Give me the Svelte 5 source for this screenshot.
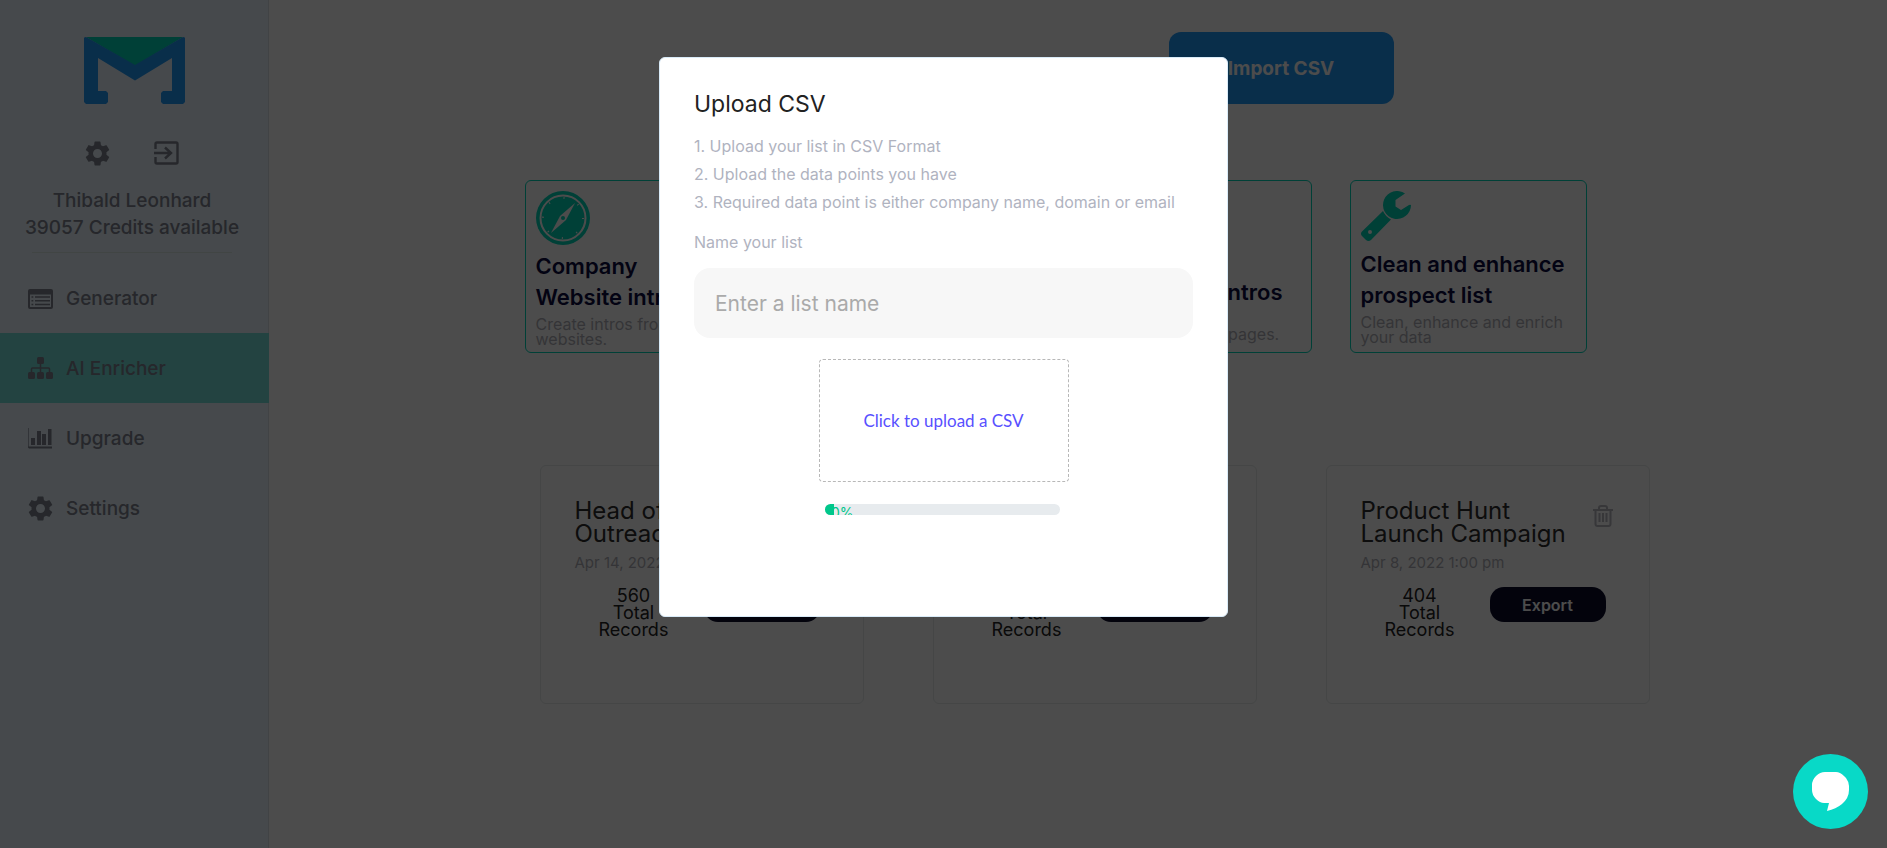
<script lang="ts">
	interface Tool {
		icon: 'compass' | 'page' | 'wrench';
		title: string[];
		description: string[];
	}

	const navItems = [
		{ icon: 'list', label: 'Generator' },
		{ icon: 'sitemap', label: 'AI Enricher' },
		{ icon: 'chart', label: 'Upgrade' },
		{ icon: 'gear', label: 'Settings' }
	];

	const tools: Tool[] = [
		{
			icon: 'compass',
			title: ['Company', 'Website intros'],
			description: ['Create intros from', 'websites.']
		},
		{
			icon: 'page',
			title: ['LinkedIn', 'intros'],
			description: ['Create intros from', 'profiles.']
		},
		{
			icon: 'page',
			title: ['Company', 'Career page intros'],
			description: ['Create intros from', 'company LinkedIn pages.']
		},
		{
			icon: 'wrench',
			title: ['Clean and enhance', 'prospect list'],
			description: ['Clean, enhance and enrich', 'your data']
		}
	];

	const lists = [
		{ title: ['Head of', 'Outreach'], date: 'Apr 14, 2022 1:00 pm', records: 560 },
		{ title: ['Sales', 'Campaign'], date: 'Apr 12, 2022 1:00 pm', records: 500 },
		{ title: ['Product Hunt', 'Launch Campaign'], date: 'Apr 8, 2022 1:00 pm', records: 404 }
	];

	const steps = [
		'1. Upload your list in CSV Format',
		'2. Upload the data points you have',
		'3. Required data point is either company name, domain or email'
	];

	let activeItem = $state('AI Enricher');
	let listName = $state('');
	let open = $state(true);
	let progress = $state(0);
	let fileInput: HTMLInputElement;

	// keep a small stub of the bar visible at 0%
	const barWidth = $derived(Math.max(progress, 4));
</script>

{#snippet gear()}
	<svg class="icon" viewBox="2 2 20 20" aria-hidden="true">
		<path
			d="M19.14 12.94c.04-.3.06-.61.06-.94 0-.32-.02-.64-.07-.94l2.03-1.58c.18-.14.23-.41.12-.61l-1.92-3.32c-.12-.22-.37-.29-.59-.22l-2.39.96c-.5-.38-1.03-.7-1.62-.94l-.36-2.54c-.04-.24-.24-.41-.48-.41h-3.84c-.24 0-.43.17-.47.41l-.36 2.54c-.59.24-1.13.57-1.62.94l-2.39-.96c-.22-.08-.47 0-.59.22L2.74 8.87c-.12.21-.08.47.12.61l2.03 1.58c-.05.3-.09.63-.09.94s.02.64.07.94l-2.03 1.58c-.18.14-.23.41-.12.61l1.92 3.32c.12.22.37.29.59.22l2.39-.96c.5.38 1.03.7 1.62.94l.36 2.54c.05.24.24.41.48.41h3.84c.24 0 .44-.17.47-.41l.36-2.54c.59-.24 1.13-.56 1.62-.94l2.39.96c.22.08.47 0 .59-.22l1.92-3.32c.12-.22.07-.47-.12-.61l-2.01-1.58zM12 15.6c-1.98 0-3.6-1.62-3.6-3.6s1.62-3.6 3.6-3.6 3.6 1.62 3.6 3.6-1.62 3.6-3.6 3.6z"
		/>
	</svg>
{/snippet}

<div class="page">
	<aside class="sidebar">
		<svg class="logo" viewBox="0 0 101 67" role="img" aria-label="Logo">
			<path class="logo-flap" d="M2 0H99L51 29Z" />
			<path
				class="logo-body"
				d="M1 0 3 .5 51 28 98 .5 100 0 101 1V65L99 67H79L77 65V56L79 54H88V21L51 43.500 14 21V54H22L24 56V65L22 67H2L0 65V1Z"
			/>
		</svg>
		<div class="account-actions">
			<button type="button" class="icon-btn" aria-label="Account settings">{@render gear()}</button>
			<button type="button" class="icon-btn" aria-label="Log out">
				<svg class="icon" viewBox="0 0 25 25" aria-hidden="true">
					<path
						class="line"
						d="M1.500 8V3Q1.500 1.500 3 1.500H22Q23.500 1.500 23.500 3V21Q23.500 22.500 22 22.500H3Q1.500 22.500 1.500 21V16M0 12H17M11 6.500 17 12 11 17.500"
					/>
				</svg>
			</button>
		</div>
		<p class="account">Thibald Leonhard</p>
		<p class="account">39057 Credits available</p>
		<hr class="divider" />
		<nav>
			{#each navItems as item}
				<a
					href="#{item.icon}"
					class="nav-item"
					class:active={activeItem === item.label}
					onclick={() => (activeItem = item.label)}
				>
					{#if item.icon === 'gear'}
						{@render gear()}
					{:else if item.icon === 'list'}
						<svg class="icon" viewBox="0 0 25 25" aria-hidden="true">
							<path
								fill-rule="evenodd"
								d="M2 3H23Q25 3 25 5V21Q25 23 23 23H2Q0 23 0 21V5Q0 3 2 3ZM2 8.500V20.500Q2 21 2.500 21H22.500Q23 21 23 20.500V8.500Z"
							/>
							<path
								d="M3.500 10.200h1.800v1.600H3.500zM3.500 14h1.800v1.600H3.500zM3.500 17.700h1.800v1.600H3.500zM7 10.200h15v1.600H7zM7 14h15v1.600H7zM7 17.700h15v1.600H7z"
							/>
						</svg>
					{:else if item.icon === 'sitemap'}
						<svg class="icon" viewBox="0 0 25 25" aria-hidden="true">
							<rect x="9" y="1" width="7" height="7" rx="1.500" />
							<path class="thin" d="M12.500 8V16M3.500 16V13Q3.500 12 4.500 12H20.500Q21.500 12 21.500 13V16" />
							<rect x="0" y="16" width="7" height="7" rx="1.500" />
							<rect x="9" y="16" width="7" height="7" rx="1.500" />
							<rect x="18" y="16" width="7" height="7" rx="1.500" />
						</svg>
					{:else}
						<svg class="icon" viewBox="0 0 25 25" aria-hidden="true">
							<path
								d="M0 2H.6V20.500H24V22.500H1L0 21.500ZM3 12H7V19H3zM9 5H13V19H9zM14 8H18V19H14zM20 3H23.500V19H20z"
							/>
						</svg>
					{/if}
					<span>{item.label}</span>
				</a>
			{/each}
		</nav>
	</aside>

	<main class="content">
		<div class="toolbar">
			<button type="button" class="btn-import" onclick={() => (open = true)}>Import CSV</button>
		</div>

		<section class="tools">
			{#each tools as tool}
				<article class="tool-card">
					{#if tool.icon === 'compass'}
						<svg class="tool-icon large" viewBox="0 0 54 54" aria-hidden="true">
							<circle cx="27" cy="27" r="27" />
							<circle class="ring" cx="27" cy="27" r="22.500" />
							<circle class="ticks" cx="27" cy="27" r="20" />
							<path class="cut" d="M39 12 30 29 15 42 24 25Z" />
							<circle cx="27" cy="27" r="2" />
						</svg>
					{:else if tool.icon === 'wrench'}
						<svg class="tool-icon" viewBox="0 0 50 50" aria-hidden="true">
							<path
								d="M44 2.500A14 14 0 1 0 50 14Q49 13.500 48 14L40 19 34.500 15.500V9ZM22 20Q24 25 30 28.500L10 49Q7.500 51 5 49L1 45Q-1 42.500 1 40.500Z"
							/>
							<circle class="cut" cx="9" cy="41" r="2" />
						</svg>
					{:else}
						<svg class="tool-icon small" viewBox="0 0 46 46" aria-hidden="true">
							<rect x="4" y="2" width="38" height="42" rx="4" />
						</svg>
					{/if}
					<h2 class="tool-title">
						{#each tool.title as line}<span>{line}</span>{/each}
					</h2>
					<p class="tool-description">
						{#each tool.description as line}<span>{line}</span>{/each}
					</p>
				</article>
			{/each}
		</section>

		<section class="lists">
			{#each lists as list}
				<article class="list-card">
					<div class="list-head">
						<h3 class="list-title">
							{#each list.title as line}<span>{line}</span>{/each}
						</h3>
						<button type="button" class="btn-delete" aria-label="Delete list">
							<svg class="trash" viewBox="0 0 20 22" aria-hidden="true">
								<path
									d="M0 5H20M6 5V3Q6 1 8 1H12Q14 1 14 3V5M2.500 5V19Q2.500 21 4.500 21H15.500Q17.500 21 17.500 19V5M6.500 8V17M10 8V17M13.500 8V17"
								/>
							</svg>
						</button>
					</div>
					<p class="list-date">{list.date}</p>
					<div class="list-foot">
						<p class="list-records">
							<span>{list.records}</span>
							<span>Total</span>
							<span>Records</span>
						</p>
						<button type="button" class="btn-export">Export</button>
					</div>
				</article>
			{/each}
		</section>
	</main>
</div>

{#if open}
	<div class="backdrop">
		<div class="modal" role="dialog" aria-modal="true" aria-labelledby="upload-title">
			<h1 id="upload-title" class="modal-title">Upload CSV</h1>
			<ul class="steps">
				{#each steps as step}
					<li>{step}</li>
				{/each}
			</ul>
			<label class="field-label" for="list-name">Name your list</label>
			<input
				id="list-name"
				class="field-input"
				type="text"
				placeholder="Enter a list name"
				bind:value={listName}
			/>
			<button type="button" class="dropzone" onclick={() => fileInput.click()}>
				Click to upload a CSV
			</button>
			<input bind:this={fileInput} type="file" accept=".csv" aria-label="CSV file" hidden />
			<div
				class="progress"
				role="progressbar"
				aria-label="Upload progress"
				aria-valuenow={progress}
				aria-valuemin="0"
				aria-valuemax="100"
			>
				<div class="progress-bar" style="width: {barWidth}%">{progress}%</div>
			</div>
		</div>
	</div>
{/if}

<button type="button" class="chat" aria-label="Open chat">
	<svg class="chat-icon" viewBox="0 0 37 39" aria-hidden="true">
		<path
			d="M13 0H24Q28 0 32 4L34 6Q37 10 37 14V18Q37 26 30 32 24 37 15 39L17 31H12Q8 31 4 27 0 23 0 18V13Q0 8 4 4 8 0 13 0Z"
		/>
	</svg>
</button>

<style>
	:global(body) {
		margin: 0;
		background: #fff;
		font-family: Inter, 'Noto Sans', sans-serif;
	}
	h1,
	h2,
	h3,
	p,
	ul {
		margin: 0;
		padding: 0;
	}
	button {
		border: none;
		padding: 0;
		font-family: inherit;
		cursor: pointer;
	}
	.page {
		display: flex;
		min-height: 100vh;
	}
	.sidebar {
		width: 269px;
		flex-shrink: 0;
		padding-top: 37px;
		background: #e9f5fd;
		box-shadow: inset -1px 0 #d9e2e8;
	}
	.logo {
		display: block;
		width: 101px;
		height: 67px;
		margin: 0 auto;
	}
	.logo-flap {
		fill: #00d5b9;
	}
	.logo-body {
		fill: #2199f7;
	}
	.account-actions {
		display: flex;
		justify-content: center;
		gap: 44px;
		margin: 37px 5px 21px 0;
	}
	.icon-btn {
		display: flex;
		background: none;
		color: #7f8290;
	}
	.icon {
		width: 25px;
		height: 25px;
		fill: currentColor;
		flex-shrink: 0;
	}
	.line,
	.thin {
		fill: none;
		stroke: currentColor;
		stroke-width: 2.4;
	}
	.thin {
		stroke-width: 1.5;
	}
	.account {
		padding-right: 5px;
		text-align: center;
		font-size: 19px;
		line-height: 27px;
		font-weight: 500;
		color: #7f8290;
	}
	.divider {
		width: 200px;
		margin: 11px 0 10px 32px;
		border: none;
		border-top: 1px solid #dbe7e4;
	}
	.nav-item {
		display: flex;
		align-items: center;
		gap: 13px;
		height: 70px;
		padding-left: 28px;
		font-size: 19px;
		font-weight: 500;
		color: #7f8290;
		text-decoration: none;
	}
	.nav-item.active {
		background: #75e0d9;
	}
	.content {
		flex: 1;
		min-width: 0;
		padding-top: 32px;
	}
	.toolbar {
		display: flex;
		justify-content: center;
		padding-left: 406px;
	}
	.btn-import {
		width: 225px;
		height: 72px;
		border-radius: 12px;
		background: #2199f7;
		color: #fff;
		font-size: 19px;
		font-weight: 700;
	}
	.tools {
		display: flex;
		justify-content: center;
		gap: 38px;
		margin-top: 76px;
		padding-right: 45px;
	}
	.tool-card {
		box-sizing: border-box;
		width: 237px;
		height: 173px;
		padding: 10px;
		border: 1px solid #00d5b9;
		border-radius: 6px;
		white-space: nowrap;
	}
	.tool-icon {
		display: block;
		width: 50px;
		height: 50px;
		margin-bottom: 8px;
		fill: #00d5b9;
	}
	.tool-icon.large {
		width: 54px;
		height: 54px;
		margin-bottom: 6px;
	}
	.tool-icon.small {
		width: 47px;
		height: 47px;
	}
	.ring {
		fill: none;
		stroke: #fff;
		stroke-width: 2;
	}
	.ticks {
		fill: none;
		stroke: #fff;
		stroke-width: 2;
		stroke-dasharray: 1 14.700;
	}
	.cut {
		fill: #fff;
	}
	.tool-title {
		margin-bottom: 4px;
		font-size: 22px;
		line-height: 31px;
		font-weight: 600;
		color: #0b0b40;
	}
	.tool-title span,
	.tool-description span,
	.list-title span,
	.list-records span {
		display: block;
	}
	.tool-description {
		font-size: 16px;
		line-height: 15px;
		color: #b0b0b8;
	}
	.lists {
		display: flex;
		justify-content: center;
		gap: 69px;
		margin-top: 112px;
		padding-left: 33px;
	}
	.list-card {
		box-sizing: border-box;
		width: 324px;
		height: 239px;
		padding: 33px 36px 33px 34px;
		border: 1px solid #e6eaea;
		border-radius: 6px;
	}
	.list-head {
		display: flex;
		justify-content: space-between;
		align-items: flex-start;
	}
	.list-title {
		font-size: 24px;
		line-height: 23px;
		font-weight: 400;
		color: #2c2c2c;
		white-space: nowrap;
	}
	.btn-delete {
		margin-top: 6px;
		background: none;
	}
	.trash {
		display: block;
		width: 20px;
		height: 22px;
		fill: none;
		stroke: #b8b8c0;
		stroke-width: 2;
	}
	.list-date {
		margin-top: 6px;
		font-size: 15px;
		line-height: 24px;
		color: #b0b0b8;
	}
	.list-foot {
		display: flex;
		align-items: flex-start;
		justify-content: space-between;
		margin-top: 12px;
		padding: 0 7px 0 24px;
	}
	.list-records {
		text-align: center;
		font-size: 18px;
		line-height: 17px;
		color: #222;
	}
	.btn-export {
		width: 116px;
		height: 35px;
		border-radius: 14px;
		background: #0b0b2b;
		color: #fff;
		font-size: 16px;
		font-weight: 600;
	}
	.backdrop {
		position: fixed;
		inset: 0;
		display: flex;
		align-items: flex-start;
		justify-content: center;
		padding-top: 57px;
		background: rgba(0, 0, 0, 0.7);
	}
	.modal {
		box-sizing: border-box;
		display: flex;
		flex-direction: column;
		width: 569px;
		padding: 32px 34px 101px;
		background: #fff;
		border: 1px solid #d9ebf8;
		border-radius: 6px;
	}
	.modal-title {
		margin-bottom: 14px;
		font-size: 23px;
		line-height: 28px;
		font-weight: 400;
		color: #222;
	}
	.steps {
		list-style: none;
		font-size: 16px;
		line-height: 28px;
		color: #b0b3bf;
	}
	.field-label {
		margin: 12px 0;
		font-size: 16px;
		line-height: 28px;
		color: #b0b3bf;
	}
	.field-input {
		box-sizing: border-box;
		width: 100%;
		height: 70px;
		padding: 0 21px;
		border: none;
		border-radius: 16px;
		background: #f7f7f7;
		font-family: inherit;
		font-size: 21px;
		color: #222;
	}
	.field-input::placeholder {
		color: #aaa;
	}
	.dropzone {
		align-self: center;
		box-sizing: border-box;
		width: 250px;
		height: 123px;
		margin: 21px 0 22px;
		border: 1px dashed #b8b8b8;
		border-radius: 4px;
		background: none;
		font-family: Lato, sans-serif;
		font-size: 17px;
		color: #5850ff;
	}
	.progress {
		align-self: center;
		width: 235px;
		height: 11px;
		margin-right: 2px;
		overflow: hidden;
		border-radius: 6px;
		background: #e7ebee;
	}
	.progress-bar {
		box-sizing: border-box;
		height: 11px;
		padding-left: 6px;
		background: #00c78b;
		color: #00c78b;
		font-size: 14px;
		line-height: 18px;
	}
	.chat {
		position: fixed;
		right: 19px;
		bottom: 19px;
		display: flex;
		align-items: center;
		justify-content: center;
		width: 75px;
		height: 75px;
		border-radius: 50%;
		background: #08d9c7;
	}
	.chat-icon {
		width: 37px;
		height: 39px;
		fill: #fff;
	}
</style>
